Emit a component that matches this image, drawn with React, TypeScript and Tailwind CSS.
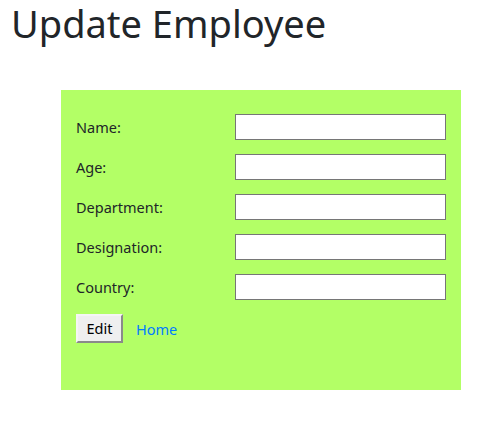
import React from 'react';

const fields = ['Name:', 'Age:', 'Department:', 'Designation:', 'Country:'];

export default function App() {
  return (
    <div className="min-h-[436px] bg-white text-[#212529]" style={{ fontFamily: '"Noto Sans", "Open Sans", sans-serif' }}>
      <h1 className="pl-[11px] text-[38px] leading-[46px] font-normal">Update Employee</h1>

      <div className="ml-[61px] mt-11 w-[400px] h-[300px] bg-[#b3ff66] px-[15px] pt-6">
        <div className="flex flex-col gap-[14px]">
          {fields.map((f) => (
            <div key={f} className="flex items-center h-[26px]">
              <label className="w-[159px] pt-[2px] text-[14.5px]">{f}</label>
              <input type="text" className="w-[211px] h-[26px] bg-white border border-[#767676] outline-none" />
            </div>
          ))}
        </div>

        <div className="flex items-center gap-[13px] mt-[14px]">
          <button className="w-[47px] h-[29px] bg-[#efefef] text-[14.5px] text-black border-2 border-t-[#f5f5f5] border-l-[#f5f5f5] border-b-[#8a8a8a] border-r-[#8a8a8a]">
            Edit
          </button>
          <a href="#" className="pt-[2px] text-[14.5px] text-[#007bff]">Home</a>
        </div>
      </div>
    </div>
  );
}
